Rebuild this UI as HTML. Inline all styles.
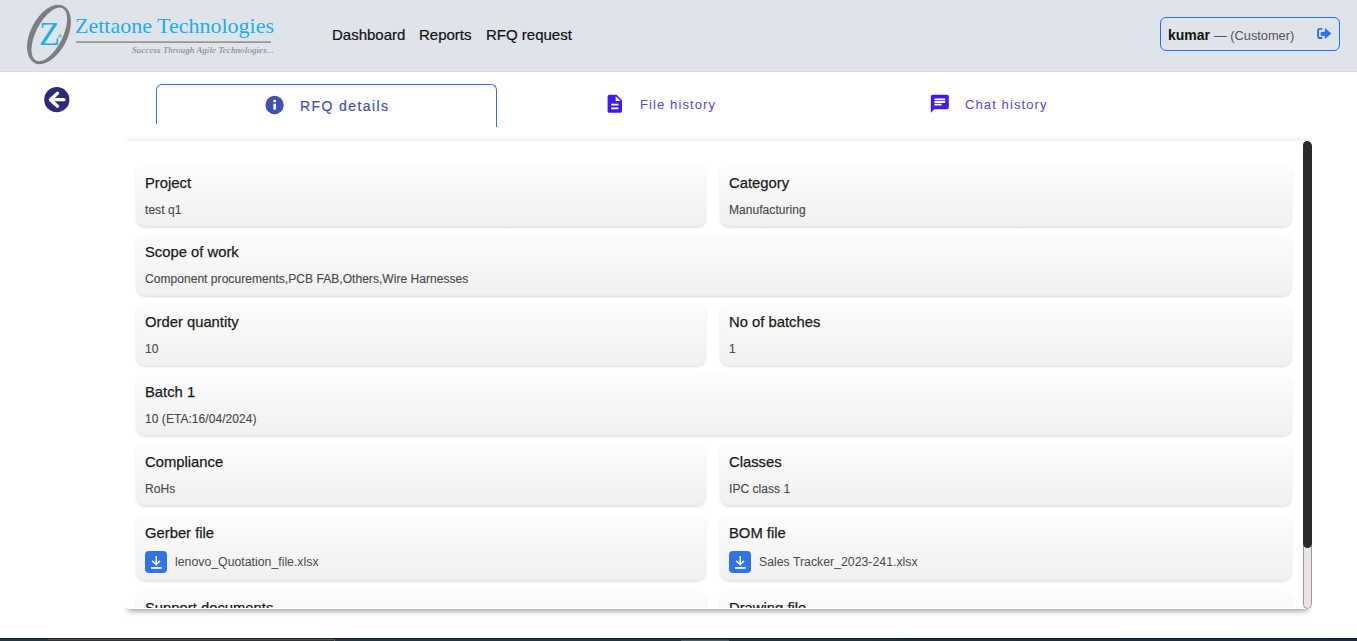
<!DOCTYPE html>
<html>
<head>
<meta charset="utf-8">
<style>
*{box-sizing:border-box;margin:0;padding:0}
html,body{width:1357px;height:641px;overflow:hidden;background:#fff;font-family:"Liberation Sans",sans-serif}
.abs{position:absolute}
#hdr{position:absolute;left:0;top:0;width:1357px;height:72px;background:#dfe3ea;border-bottom:1px solid #d7dade}
.nav{position:absolute;top:26.5px;font-size:15px;color:#111;line-height:16px;white-space:nowrap;-webkit-text-stroke:0.2px #111}
#user{position:absolute;left:1160px;top:17px;width:180px;height:34px;border:1px solid #1f6ff2;border-radius:6px}
.tabtxt{position:absolute;white-space:nowrap;line-height:16px}
#pshadow{position:absolute;left:124px;top:141px;width:1188px;height:468px;border-radius:5px;box-shadow:0 5px 6px -4px rgba(0,0,0,.5),0 -4px 5px -3px rgba(0,0,0,.1);clip-path:inset(-12px 0 -12px 0)}
#panel{position:absolute;left:124px;top:141px;width:1188px;height:468px;background:#fff;overflow:hidden;border-radius:5px}
.card{position:absolute;height:62px;border-radius:9px;background:linear-gradient(#fdfdfd,#f0f0f0);box-shadow:0 1px 2px rgba(0,0,0,.13),inset 0 -1px 2px rgba(0,0,0,.03)}
.card .t{position:absolute;left:9px;top:10px;font-size:14.8px;line-height:16px;color:#1a1a1a;white-space:nowrap;-webkit-text-stroke:0.25px #1a1a1a}
.card .v{position:absolute;left:9px;top:39px;font-size:12px;letter-spacing:0.05px;line-height:13px;color:#4a4a4a;-webkit-text-stroke:0.15px #4a4a4a;white-space:nowrap}
.card .fv{position:absolute;left:39px;top:41px;font-size:12.3px;line-height:13px;color:#4a4a4a;white-space:nowrap}
.card .dl{position:absolute;left:9px;top:36px;width:22px;height:22px}
.L{left:12px;width:570px}
.R{left:596px;width:572px}
.F{left:12px;width:1156px}
#bottom{position:absolute;left:0;top:638px;width:1357px;height:3px;background:linear-gradient(90deg,#213844,#1f3543 40%,#1c2b3e 75%,#1b2940);border-top:1px solid #13222c}
</style>
</head>
<body>
<div id="hdr">
  <svg class="abs" style="left:0;top:0" width="300" height="72" viewBox="0 0 300 72">
    <path fill="#7d7e80" fill-rule="evenodd" d="M63.53 5.89 A18.3 32.0 27 1 0 34.47 62.91 A18.3 32.0 27 1 0 63.53 5.89Z M62.60 8.29 A13.3 29.3 27 1 0 36.00 60.51 A13.3 29.3 27 1 0 62.60 8.29Z"/>
    <text x="39" y="45" font-family="Liberation Serif" font-size="34" fill="#1caeea">Z</text>
    <path d="M56.5 39.5 L61 35 M58.5 35 L61 35 L61 37.5" stroke="#1caeea" stroke-width="0.9" fill="none"/>
    <text x="75" y="33" font-family="Liberation Serif" font-size="22" fill="#1caeea">Zettaone Technologies</text>
    <rect x="76" y="41.3" width="195" height="1.6" fill="#8f8f8f"/>
    <text x="132" y="53" font-family="Liberation Serif" font-style="italic" font-size="9" fill="#7c7c7c" letter-spacing="0.1">Success Through Agile Technologies...</text>
  </svg>
  <div class="nav" style="left:332px">Dashboard</div>
  <div class="nav" style="left:419px">Reports</div>
  <div class="nav" style="left:486px">RFQ request</div>
  <div id="user">
    <span class="abs" style="left:7px;top:9px;font-size:14px;font-weight:bold;color:#111;line-height:16px;white-space:nowrap">kumar <span style="font-weight:normal;color:#555;font-size:12.8px">— (Customer)</span></span>
    <svg class="abs" style="left:155px;top:9px" width="17" height="13" viewBox="0 0 17 13">
      <path d="M6.3 1.9 H3.9 Q2.05 1.9 2.05 3.8 V9.1 Q2.05 11 3.9 11 H6.3" stroke="#2f6fe8" stroke-width="1.9" fill="none"/>
      <path d="M4.9 5.1 H9 V1.3 L15.2 6.6 L9 11.8 V8.7 H4.9 Z" fill="#2f6fe8" stroke="#2f6fe8" stroke-width="0.3" stroke-linejoin="round"/>
    </svg>
  </div>
</div>

<!-- back button -->
<svg class="abs" style="left:44px;top:87px" width="26" height="26" viewBox="0 0 26 26">
  <circle cx="12.8" cy="12.7" r="12.6" fill="#2d2a7b"/>
  <path d="M13.5 6.2 L6.4 12.7 L13.5 19.2 M6.6 12.7 H20" stroke="#fff" stroke-width="3.3" fill="none" stroke-linecap="round" stroke-linejoin="round"/>
</svg>

<!-- tabs -->
<div class="abs" style="left:156px;top:84px;width:341px;height:43px;border:1px solid #3a6fdc;border-bottom:none;border-radius:6px 6px 0 0"></div>
<div class="abs" style="left:155px;top:124px;width:3px;height:3px;background:#fff"></div>
<svg class="abs" style="left:265px;top:95px" width="20" height="20" viewBox="0 0 20 20">
  <circle cx="9.6" cy="10" r="9.15" fill="#3f51b5"/>
  <rect x="8.4" y="4.9" width="2.6" height="2.3" fill="#fff"/>
  <rect x="8.4" y="8.75" width="2.6" height="5.85" fill="#fff"/>
</svg>
<div class="tabtxt" style="left:300px;top:98px;font-size:14px;letter-spacing:1.4px;color:#3f51b5;-webkit-text-stroke:0.2px #3f51b5">RFQ details</div>
<svg class="abs" style="left:603.5px;top:93.1px" width="21.6" height="21.6" viewBox="0 0 24 24"><path fill="#3d1cf3" d="M14 2H6c-1.1 0-1.99.9-1.99 2L4 20c0 1.1.89 2 1.99 2H18c1.1 0 2-.9 2-2V8l-6-6zm2 16H8v-2h8v2zm0-4H8v-2h8v2zm-3-5V3.5L18.5 9H13z"/></svg>
<div class="tabtxt" style="left:640px;top:97px;font-size:13px;letter-spacing:1.1px;color:#5346ea">File history</div>
<svg class="abs" style="left:929px;top:93.2px" width="21.6" height="21.6" viewBox="0 0 24 24"><path fill="#3d1cf3" d="M20 2H4c-1.1 0-1.99.9-1.99 2L2 22l4-4h14c1.1 0 2-.9 2-2V4c0-1.1-.9-2-2-2zM6 9h12v2H6V9zm8 5H6v-2h8v2zm4-6H6V6h12v2z"/></svg>
<div class="tabtxt" style="left:965px;top:97px;font-size:13px;letter-spacing:1.1px;color:#5346ea">Chat history</div>

<div id="pshadow"></div>
<div id="panel">
<div class="abs" style="left:0;top:0;width:1188px;height:467px;overflow:hidden">
  <div class="card L" style="top:23.5px"><div class="t">Project</div><div class="v">test q1</div></div>
  <div class="card R" style="top:23.5px"><div class="t">Category</div><div class="v">Manufacturing</div></div>
  <div class="card F" style="top:93.3px"><div class="t">Scope of work</div><div class="v">Component procurements,PCB FAB,Others,Wire Harnesses</div></div>
  <div class="card L" style="top:163.3px"><div class="t">Order quantity</div><div class="v">10</div></div>
  <div class="card R" style="top:163.3px"><div class="t">No of batches</div><div class="v">1</div></div>
  <div class="card F" style="top:233.3px"><div class="t">Batch 1</div><div class="v">10 (ETA:16/04/2024)</div></div>
  <div class="card L" style="top:303.3px"><div class="t">Compliance</div><div class="v">RoHs</div></div>
  <div class="card R" style="top:303.3px"><div class="t">Classes</div><div class="v">IPC class 1</div></div>
  <div class="card L" style="top:374px;height:66px"><div class="t">Gerber file</div>
    <svg class="dl" viewBox="0 0 22 22"><rect width="22" height="22" rx="4" fill="#3174e6"/><path d="M11.2 5 V13.6 M7.2 9.8 L11.2 13.6 L15 9.8" stroke="#fff" stroke-width="1.5" fill="none"/><rect x="6" y="16.1" width="10.6" height="1.7" fill="#fff"/></svg>
    <div class="fv">lenovo_Quotation_file.xlsx</div></div>
  <div class="card R" style="top:374px;height:66px"><div class="t">BOM file</div>
    <svg class="dl" viewBox="0 0 22 22"><rect width="22" height="22" rx="4" fill="#3174e6"/><path d="M11.2 5 V13.6 M7.2 9.8 L11.2 13.6 L15 9.8" stroke="#fff" stroke-width="1.5" fill="none"/><rect x="6" y="16.1" width="10.6" height="1.7" fill="#fff"/></svg>
    <div class="fv">Sales Tracker_2023-241.xlsx</div></div>
  <div class="card L" style="top:449px"><div class="t">Support documents</div></div>
  <div class="card R" style="top:449px"><div class="t">Drawing file</div></div>
</div>
  <!-- scrollbar -->
  <div class="abs" style="left:1179px;top:0;width:9px;height:468px;background:#ebe3e3;border:1px solid #9a9a9a;border-radius:5px"></div>
  <div class="abs" style="left:1179px;top:0;width:9px;height:407px;background:#2b2b2b;border-radius:5px"></div>
</div>

<div id="bottom">
  <div class="abs" style="left:48px;top:0;width:287px;height:3px;background:#333;border-top:1px solid #555"></div>
  <div class="abs" style="left:334px;top:1px;width:1px;height:2px;background:#666"></div>
  <div class="abs" style="left:681px;top:0;width:48px;height:3px;background:#4b5d68;border-top:1px solid #2f3f48"></div>
</div>
</body>
</html>
